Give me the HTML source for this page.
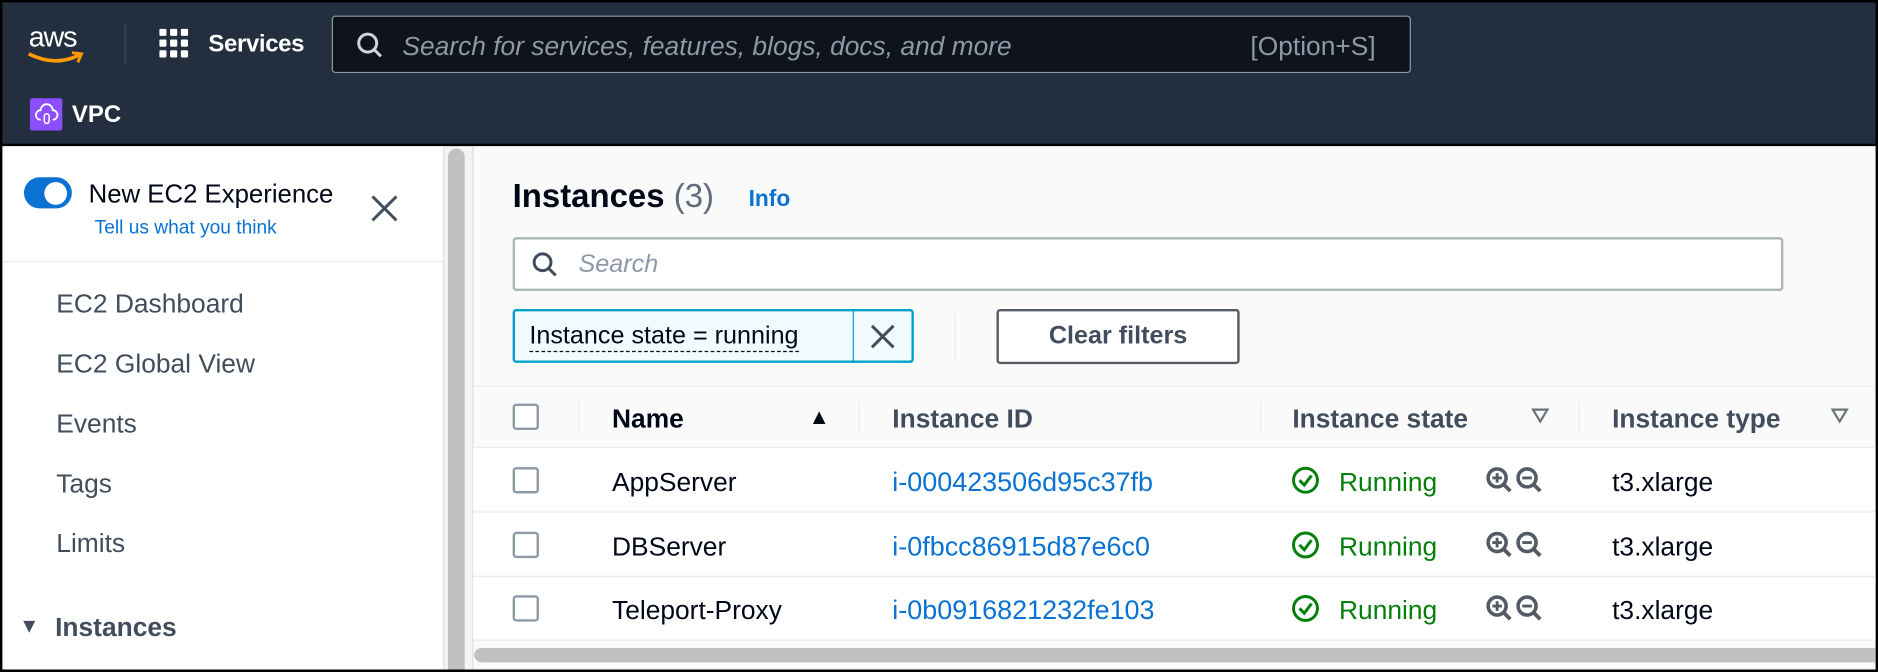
<!DOCTYPE html>
<html><head><meta charset="utf-8"><style>
*{box-sizing:border-box;margin:0;padding:0}
html,body{width:1878px;height:672px;overflow:hidden;background:#000}
#s{position:absolute;left:0;top:0;width:1568px;height:561px;transform:scale(1.19770);transform-origin:0 0;font-family:"Liberation Sans",sans-serif;background:#000}
.a{position:absolute;white-space:nowrap}
.nav{left:2px;top:2px;width:1564px;height:118px;background:#232f3e}
.side{left:2px;top:122px;width:368px;height:437px;background:#fff}
.main{left:395px;top:122px;width:1171px;height:437px;background:#fafafa}
.it{left:47px;font-size:22px;color:#414d5c}
.th{font-size:22px;font-weight:bold;color:#414d5c;top:337px}
.cb{width:22px;height:22px;border:2px solid #8c9ba5;border-radius:3px;background:#fff;left:428px}
.row{left:395px;width:1171px;height:53px;background:#fff;border-top:1px solid #e9ebed}
.td{font-size:22px;color:#000716}
.id{font-size:22.5px;color:#0972d3}
.run{font-size:22px;color:#037f0c}
.dv{width:1px;height:26px;background:#e9ebed;top:336px}
</style></head><body><div id="s">
<div class="a nav"></div>
<div class="a" style="left:24px;top:18px;color:#fff;font-size:24px;letter-spacing:-1px">aws</div>
<svg class="a" style="left:22px;top:42px" width="50" height="14"><path d="M2 3 Q24 14 44 4" stroke="#f90" stroke-width="3" fill="none"/><path d="M38 2 L46 3 L43 10" stroke="#f90" stroke-width="2.5" fill="none"/></svg>
<div class="a" style="left:104px;top:20px;width:1px;height:34px;background:#414d5c"></div>
<svg class="a" style="left:133px;top:24px" width="28" height="28" fill="#fff"><rect x="0" y="0" width="6" height="6" rx="1"/><rect x="9" y="0" width="6" height="6" rx="1"/><rect x="18" y="0" width="6" height="6" rx="1"/><rect x="0" y="9" width="6" height="6" rx="1"/><rect x="9" y="9" width="6" height="6" rx="1"/><rect x="18" y="9" width="6" height="6" rx="1"/><rect x="0" y="18" width="6" height="6" rx="1"/><rect x="9" y="18" width="6" height="6" rx="1"/><rect x="18" y="18" width="6" height="6" rx="1"/></svg>
<div class="a" style="left:174px;top:26px;color:#fff;font-size:20px;font-weight:bold;letter-spacing:-0.3px">Services</div>
<div class="a" style="left:277px;top:13px;width:901px;height:48px;background:#0f141a;border:1px solid #8d99a8;border-radius:3px"></div>
<svg class="a" style="left:297px;top:26px" width="24" height="24"><circle cx="10" cy="10" r="7.5" stroke="#d1d5db" stroke-width="2.5" fill="none"/><path d="M15.5 15.5 L21 21" stroke="#d1d5db" stroke-width="2.5"/></svg>
<div class="a" style="left:336px;top:26px;color:#8d99a8;font-size:22px;font-style:italic">Search for services, features, blogs, docs, and more</div>
<div class="a" style="left:1044px;top:26px;color:#8d99a8;font-size:22px">[Option+S]</div>
<div class="a" style="left:25px;top:82px;width:27px;height:27px;background:#8c4fff;border-radius:2px"></div>
<svg class="a" style="left:29px;top:86px" width="20" height="20"><path d="M5 14 a4 4 0 0 1 0-8 a5 5 0 0 1 10 0 a4 4 0 0 1 0 8" stroke="#fff" stroke-width="1.5" fill="none"/><rect x="8" y="9" width="4" height="8" rx="2" stroke="#fff" stroke-width="1.3" fill="none"/></svg>
<div class="a" style="left:60px;top:85px;color:#fff;font-size:20px;font-weight:bold">VPC</div>

<div class="a side"></div>
<div class="a" style="left:20px;top:148px;width:40px;height:26px;border-radius:13px;background:#0972d3"></div>
<div class="a" style="left:37px;top:152px;width:19px;height:19px;border-radius:50%;background:#fff"></div>
<div class="a" style="left:74px;top:150px;font-size:21.5px;color:#000716">New EC2 Experience</div>
<div class="a" style="left:79px;top:182px;font-size:16px;color:#0972d3">Tell us what you think</div>
<svg class="a" style="left:309px;top:162px" width="24" height="24"><path d="M2 2L22 22M22 2L2 22" stroke="#414d5c" stroke-width="2.5"/></svg>
<div class="a" style="left:2px;top:218px;width:368px;height:1px;background:#e9ebed"></div>
<div class="a it" style="top:241px">EC2 Dashboard</div>
<div class="a it" style="top:291px">EC2 Global View</div>
<div class="a it" style="top:341px">Events</div>
<div class="a it" style="top:391px">Tags</div>
<div class="a it" style="top:441px">Limits</div>
<div class="a" style="left:16px;top:513px;font-size:17px;color:#414d5c">▼</div>
<div class="a" style="left:46px;top:511px;font-size:22px;font-weight:bold;color:#414d5c">Instances</div>
<div class="a" style="left:370px;top:122px;width:25px;height:437px;background:#f4f4f4;border-left:1px solid #e5e5e5;border-right:1px solid #e5e5e5"></div>
<div class="a" style="left:374px;top:124px;width:14px;height:435px;background:#c1c1c1;border-radius:7px 7px 0 0"></div>

<div class="a main"></div>
<div class="a" style="left:428px;top:148px;font-size:27.5px;font-weight:bold;color:#000716">Instances <span style="font-weight:normal;color:#5f6b7a">(3)</span></div>
<div class="a" style="left:625px;top:156px;font-size:19px;font-weight:bold;color:#0972d3">Info</div>
<div class="a" style="left:428px;top:198px;width:1061px;height:45px;background:#fff;border:2px solid #aab7b8;border-radius:3px"></div>
<svg class="a" style="left:443px;top:209px" width="24" height="24"><circle cx="10" cy="10" r="7" stroke="#414d5c" stroke-width="2.5" fill="none"/><path d="M15 15 L21 21" stroke="#414d5c" stroke-width="2.5"/></svg>
<div class="a" style="left:483px;top:209px;font-size:21px;font-style:italic;color:#8d99a8">Search</div>
<div class="a" style="left:428px;top:258px;width:335px;height:45px;background:#f1faff;border:2px solid #00a1c9;border-radius:3px"></div>
<div class="a" style="left:712px;top:259px;width:1px;height:43px;background:#00a1c9"></div>
<div class="a" style="left:442px;top:269px;font-size:21px;color:#000716;border-bottom:1px dashed #000716;line-height:24px">Instance state = running</div>
<svg class="a" style="left:726px;top:270px" width="22" height="22"><path d="M2 2L20 20M20 2L2 20" stroke="#414d5c" stroke-width="2.5"/></svg>
<div class="a" style="left:797px;top:262px;width:1px;height:40px;background:#e9ebed"></div>
<div class="a" style="left:832px;top:258px;width:203px;height:46px;background:#fff;border:2px solid #545b64;border-radius:3px;font-size:21px;font-weight:bold;color:#414d5c;text-align:center;line-height:42px">Clear filters</div>

<div class="a" style="left:395px;top:322px;width:1171px;height:1px;background:#e9ebed"></div>
<div class="a cb" style="top:337px"></div>
<div class="a dv" style="left:483px"></div>
<div class="a th" style="left:511px;color:#000716">Name</div>
<div class="a" style="left:675px;top:338px;font-size:18px;color:#000716">▲</div>
<div class="a dv" style="left:717px"></div>
<div class="a th" style="left:745px">Instance ID</div>
<div class="a dv" style="left:1052px"></div>
<div class="a th" style="left:1079px">Instance state</div>
<svg class="a" style="left:1278px;top:340px" width="16" height="14"><path d="M2 2H14L8 12Z" stroke="#687078" stroke-width="1.8" fill="none"/></svg>
<div class="a dv" style="left:1318px"></div>
<div class="a th" style="left:1346px">Instance type</div>
<svg class="a" style="left:1528px;top:340px" width="16" height="14"><path d="M2 2H14L8 12Z" stroke="#687078" stroke-width="1.8" fill="none"/></svg>

<div class="a row" style="top:373px"></div>
<div class="a row" style="top:427px"></div>
<div class="a row" style="top:481px;height:54px;border-bottom:1px solid #e9ebed"></div>

<div class="a cb" style="top:390px"></div>
<div class="a td" style="left:511px;top:390px">AppServer</div>
<div class="a id" style="left:745px;top:390px">i-000423506d95c37fb</div>
<div class="a cb" style="top:444px"></div>
<div class="a td" style="left:511px;top:444px">DBServer</div>
<div class="a id" style="left:745px;top:444px">i-0fbcc86915d87e6c0</div>
<div class="a cb" style="top:497px"></div>
<div class="a td" style="left:511px;top:497px">Teleport-Proxy</div>
<div class="a id" style="left:745px;top:497px">i-0b0916821232fe103</div>

<svg width="0" height="0" style="position:absolute"><defs>
<g id="ok"><circle cx="12" cy="12" r="10" stroke="#037f0c" stroke-width="2.5" fill="none"/><path d="M7 12 L11 16 L17 8" stroke="#037f0c" stroke-width="2.5" fill="none"/></g>
<g id="zm"><circle cx="10" cy="10" r="7.5" stroke="#545b64" stroke-width="3" fill="none"/><path d="M15 15L21 21" stroke="#545b64" stroke-width="3.2"/><path d="M6 10H14M10 6V14" stroke="#545b64" stroke-width="2.4"/><circle cx="35" cy="10" r="7.5" stroke="#545b64" stroke-width="3" fill="none"/><path d="M40 15L46 21" stroke="#545b64" stroke-width="3.2"/><path d="M31 10H39" stroke="#545b64" stroke-width="2.4"/></g>
</defs></svg>
<svg class="a" style="left:1078px;top:389px" width="26" height="26"><use href="#ok"/></svg>
<div class="a run" style="left:1118px;top:390px">Running</div>
<svg class="a" style="left:1240px;top:389px" width="50" height="24"><use href="#zm"/></svg>
<div class="a td" style="left:1346px;top:390px">t3.xlarge</div>
<svg class="a" style="left:1078px;top:443px" width="26" height="26"><use href="#ok"/></svg>
<div class="a run" style="left:1118px;top:444px">Running</div>
<svg class="a" style="left:1240px;top:443px" width="50" height="24"><use href="#zm"/></svg>
<div class="a td" style="left:1346px;top:444px">t3.xlarge</div>
<svg class="a" style="left:1078px;top:496px" width="26" height="26"><use href="#ok"/></svg>
<div class="a run" style="left:1118px;top:497px">Running</div>
<svg class="a" style="left:1240px;top:496px" width="50" height="24"><use href="#zm"/></svg>
<div class="a td" style="left:1346px;top:497px">t3.xlarge</div>

<div class="a" style="left:396px;top:541px;width:1170px;height:12px;background:#c1c1c1;border-radius:6px 0 0 6px"></div>
</div></body></html>
